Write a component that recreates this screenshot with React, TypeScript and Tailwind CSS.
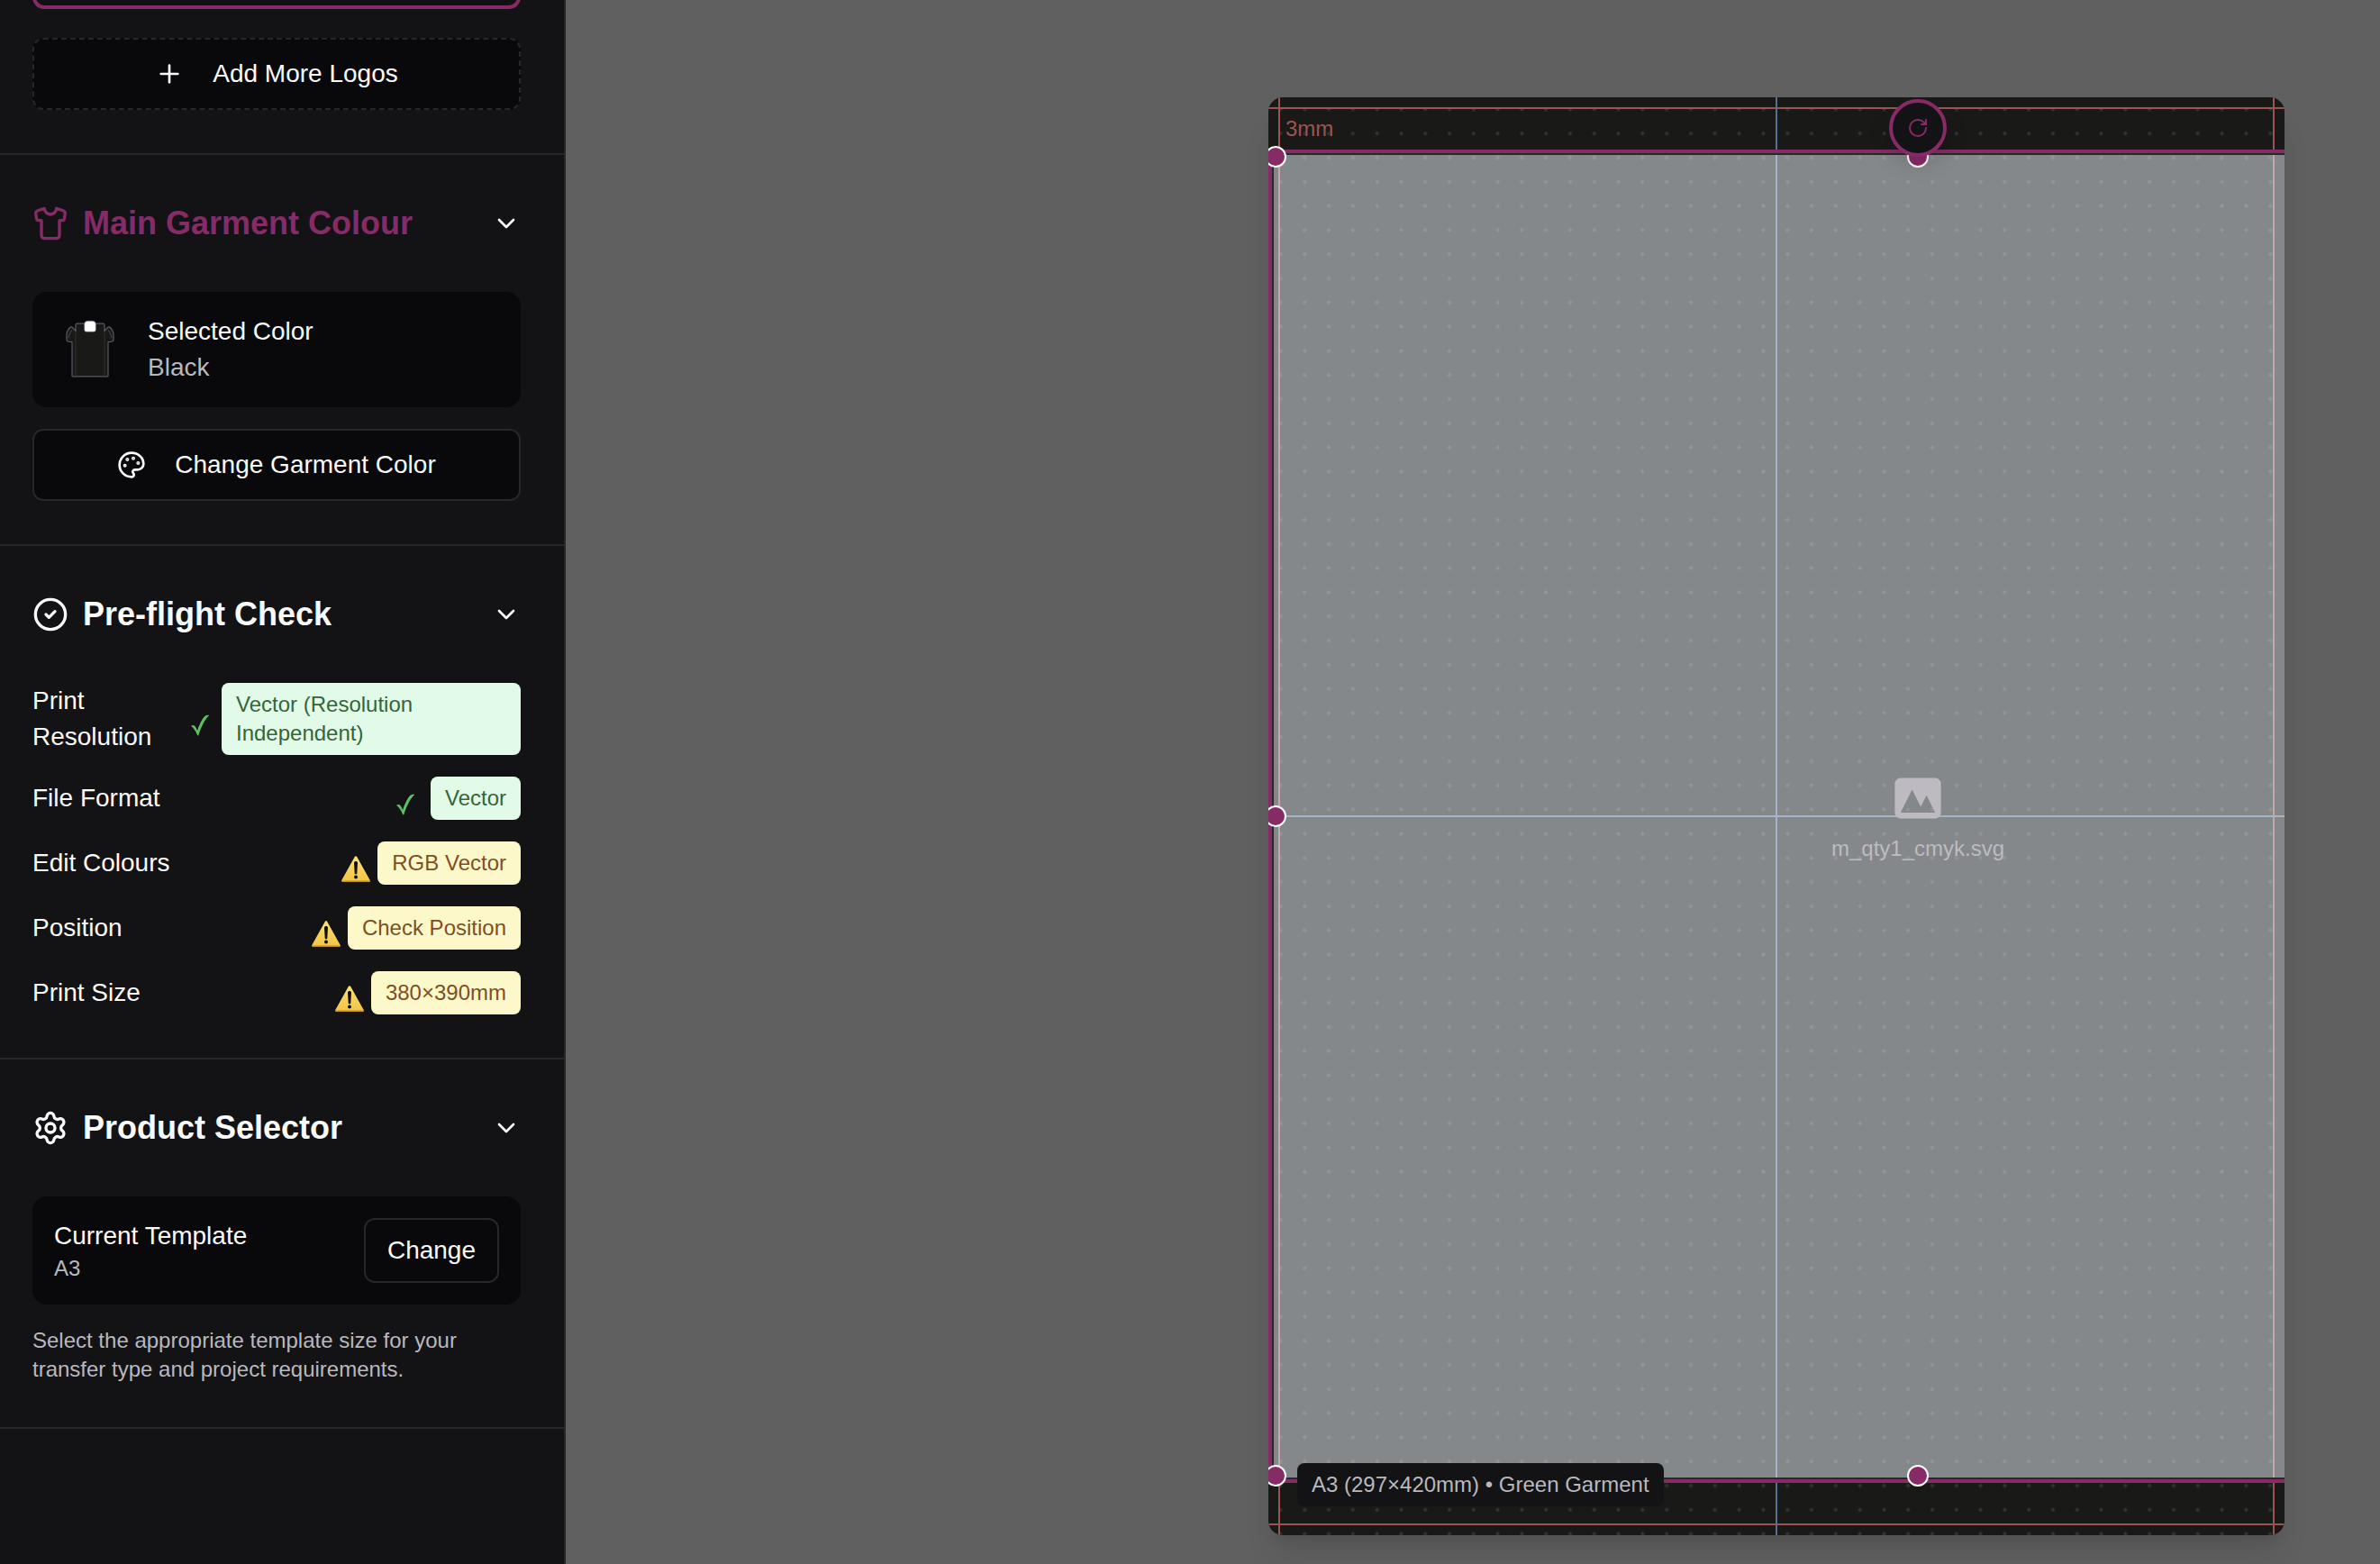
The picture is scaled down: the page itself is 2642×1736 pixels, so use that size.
import React from "react";
import {
  ChevronDown,
  CircleCheck,
  Palette,
  Plus,
  RotateCw,
  Settings,
  Shirt,
} from "lucide-react";

type Status = "ok" | "warn";

const checks: { label: string; value: string; status: Status; wide?: boolean }[] = [
  { label: "Print Resolution", value: "Vector (Resolution Independent)", status: "ok", wide: true },
  { label: "File Format", value: "Vector", status: "ok" },
  { label: "Edit Colours", value: "RGB Vector", status: "warn" },
  { label: "Position", value: "Check Position", status: "warn" },
  { label: "Print Size", value: "380×390mm", status: "warn" },
];

function TickIcon({ wide }: { wide?: boolean }) {
  return (
    <svg
      viewBox={wide ? "0 0 28 48" : "0 0 32 48"}
      className={wide ? "h-12 w-7 shrink-0" : "h-12 w-8 shrink-0"}
      aria-label="Passed"
    >
      <path
        d="M2 31.800C3.200 30.800 5.200 30.700 6.200 31.800 7.400 33.200 8.400 35 9.100 37 11.500 29.800 14.500 23.600 17.500 20.800 18.900 19.600 20.800 19.500 22.400 19.900 17.800 23.600 13.300 32.500 10.400 41.900 10.100 42.700 9.400 42.700 9.100 41.900 7.300 37.600 5.200 34.400 2 31.800Z"
        fill="#5fc063"
      />
    </svg>
  );
}

function WarnIcon() {
  return (
    <svg viewBox="0 0 32 48" className="h-12 w-8 shrink-0" aria-label="Warning">
      <defs>
        <linearGradient id="warn-fill" x1="0" y1="0" x2="0" y2="1">
          <stop offset="0" stopColor="#fbdf72" />
          <stop offset="1" stopColor="#f3c545" />
        </linearGradient>
      </defs>
      <path
        d="M14.900 16.800c.5-.9 1.700-.9 2.200 0L31.700 43c.5 1 0 1.900-1.100 1.900H1.400C.3 44.900-.2 44 .3 43Z"
        fill="url(#warn-fill)"
      />
      <path d="M.4 43.600h31.200c.1.800-.4 1.400-1.200 1.400H1.500C.7 45 .3 44.400.4 43.600Z" fill="#c08f2c" />
      <path d="M14 23.800c0-2.400 4-2.400 4 0l-.7 11.400c-.1 1.600-2.500 1.600-2.600 0Z" fill="#101010" />
      <circle cx="16" cy="39.600" r="2" fill="#101010" />
    </svg>
  );
}

function GarmentPreview() {
  return (
    <svg viewBox="0 0 80 80" className="size-20 shrink-0" aria-label="Black garment">
      <g fill="#191917" stroke="#565b66" strokeWidth="1.200" strokeLinejoin="round">
        <path d="M24 19.500 20.500 15.500C19.700 14.600 18.500 14.500 17.600 15.500 15.500 18 14 20.500 14 23v5.500c0 1.500 1.500 3 4 3h2V69c0 .6.400.9 1 .9h38c.6 0 1-.3 1-.9V31.500h2c2.500 0 4-1.500 4-3V23c0-2.500-1.500-5-3.600-7.500-.9-1-2.100-.9-2.900 0L56 19.500V13c0-1.100-.7-1.800-1.800-1.800H25.800c-1.100 0-1.800.7-1.800 1.800Z" />
      </g>
      <path d="M24 20v48M56 20v48" stroke="#2a2a2a" strokeWidth="1.500" fill="none" />
      <path d="M16 27c.5-3.500 2-6.500 4-8.500M64 27c-.5-3.500-2-6.500-4-8.500" stroke="#4a4e57" strokeWidth="1" fill="none" />
      <path d="M33.700 12c0-2.500 1.500-3.700 4-3.700h4.600c2.500 0 4 1.200 4 3.700v6c0 1.500-.8 2.200-2.200 2.200h-8.200c-1.400 0-2.200-.7-2.200-2.200Z" fill="#fff" stroke="#6b7280" strokeWidth=".6" />
    </svg>
  );
}

function Section({
  title,
  icon,
  accent,
  children,
}: {
  title: string;
  icon: React.ReactNode;
  accent?: boolean;
  children: React.ReactNode;
}) {
  return (
    <section className="border-b-2 border-[#27272a] py-12 pr-12 pl-9">
      <h2>
        <button
          type="button"
          aria-expanded="true"
          className={
            accent
              ? "mb-12 flex h-14 w-full items-center gap-4 text-left text-4xl font-bold text-[#862b66]"
              : "mb-12 flex h-14 w-full items-center gap-4 text-left text-4xl font-bold text-[#fafafa]"
          }
        >
          {icon}
          <span className="flex-1">{title}</span>
          <ChevronDown className="size-8 text-[#fafafa]" />
        </button>
      </h2>
      {children}
    </section>
  );
}

function Sidebar() {
  return (
    <aside className="w-[628px] shrink-0 overflow-hidden border-r-2 border-[#27272a] bg-[#131315]">
      <div className="border-b-2 border-[#27272a] pr-12 pb-12 pl-9">
        <div className="-mt-4 h-[26px] rounded-2xl border-4 border-[#862b66] bg-[#111113]" />
        <button
          type="button"
          className="mt-8 flex h-20 w-full items-center justify-center gap-8 rounded-xl border-2 border-dashed border-[#27272a] bg-[#09090b]"
        >
          <Plus className="size-8" />
          Add More Logos
        </button>
      </div>

      <Section title="Main Garment Colour" accent icon={<Shirt className="size-10" />}>
        <div className="flex items-center gap-6 rounded-2xl bg-[#09090b] p-6">
          <GarmentPreview />
          <div>
            <p>Selected Color</p>
            <p className="text-[#b9b8be]">Black</p>
          </div>
        </div>
        <button
          type="button"
          className="mt-6 flex h-20 w-full items-center justify-center gap-8 rounded-xl border-2 border-[#27272a] bg-[#09090b]"
        >
          <Palette className="size-8" />
          Change Garment Color
        </button>
      </Section>

      <Section title="Pre-flight Check" icon={<CircleCheck className="size-10" />}>
        <ul className="flex flex-col gap-6">
          {checks.map((c) => (
            <li key={c.label} className="flex items-center justify-between">
              <span>{c.label}</span>
              <span className="flex shrink-0 items-center gap-2">
                {c.status === "ok" ? <TickIcon wide={c.wide} /> : <WarnIcon />}
                <span
                  className={
                    c.status === "ok"
                      ? "max-w-[332px] rounded-lg bg-[#e2fbe8] px-4 py-2 text-2xl leading-8 text-[#356539]"
                      : "rounded-lg bg-[#fdf8ca] px-4 py-2 text-2xl leading-8 text-[#7f4f24]"
                  }
                >
                  {c.value}
                </span>
              </span>
            </li>
          ))}
        </ul>
      </Section>

      <Section title="Product Selector" icon={<Settings className="size-10" />}>
        <div className="flex items-center justify-between rounded-2xl bg-[#09090b] p-6">
          <div>
            <p>Current Template</p>
            <p className="text-2xl leading-8 text-[#b9b8be]">A3</p>
          </div>
          <button
            type="button"
            className="h-[72px] rounded-xl border-2 border-[#27272a] px-6"
          >
            Change
          </button>
        </div>
        <p className="mt-6 text-2xl leading-8 text-[#b9b8be]">
          Select the appropriate template size for your transfer type and project requirements.
        </p>
      </Section>
    </aside>
  );
}

const handle = "absolute size-6 rounded-full border-2 border-white bg-[#862b66]";

function Artboard() {
  return (
    <div className="relative h-[1596px] w-[1128px] overflow-hidden rounded-2xl bg-[#191917]">
      <svg className="absolute inset-0 size-full" aria-hidden="true">
        <defs>
          <pattern id="dots" width="26.800" height="26.800" patternUnits="userSpaceOnUse">
            <path d="M13.400 10.900 15.900 13.400 13.400 15.900 10.900 13.400Z" fill="#323338" />
          </pattern>
        </defs>
        <rect width="100%" height="100%" fill="url(#dots)" />
      </svg>

      {/* Bleed guides */}
      <div className="absolute inset-y-0 left-[11px] w-0.5 bg-[#9b5551]" />
      <div className="absolute inset-y-0 right-[11px] w-0.5 bg-[#9b5551]" />
      <div className="absolute inset-x-0 top-[11px] h-0.5 bg-[#9b5551]" />
      <div className="absolute inset-x-0 bottom-[11px] h-0.5 bg-[#9b5551]" />
      <span className="absolute top-[19px] left-[19px] text-2xl leading-8 text-[#9b5551]">3mm</span>

      {/* Centre guides */}
      <div className="absolute inset-y-0 left-[563px] w-0.5 bg-[#5a7092]" />
      <div className="absolute inset-x-0 top-[797px] h-0.5 bg-[#5a7092]" />

      {/* Placed logo */}
      <div className="absolute top-[58px] left-0 h-[1480px] w-[1442px] border-4 border-[#862b66]">
        <div className="flex size-full flex-col items-center justify-center gap-2 border-2 border-[#29292b] bg-[#f1f7fd]/50">
          <svg viewBox="0 0 20 20" className="size-16 text-[#bdbbc1]" fill="currentColor" aria-hidden="true">
            <path
              fillRule="evenodd"
              clipRule="evenodd"
              d="M4 3a2 2 0 00-2 2v10a2 2 0 002 2h12a2 2 0 002-2V5a2 2 0 00-2-2H4zm12 12H4l4-8 3 6 2-4 3 6z"
            />
          </svg>
          <span className="text-2xl leading-8 text-[#bdbbc1]">m_qty1_cmyk.svg</span>
        </div>
        <span className={`${handle} -top-2 -left-2`} />
        <span className={`${handle} -top-2 left-[705px]`} />
        <span className={`${handle} top-[724px] -left-2`} />
        <span className={`${handle} -bottom-2 -left-2`} />
        <span className={`${handle} -bottom-2 left-[705px]`} />
        <button
          type="button"
          aria-label="Rotate"
          className="absolute -top-[60px] left-[685px] flex size-16 items-center justify-center rounded-full border-4 border-[#862b66] bg-[#131315] text-[#862b66] shadow-[0_8px_24px_rgba(0,0,0,0.15)]"
        >
          <RotateCw className="size-6" />
        </button>
      </div>

      <div className="absolute bottom-8 left-8 rounded-lg bg-[#131315] px-4 py-2 text-2xl leading-8 text-[#b9b8be]">
        A3 (297×420mm) • Green Garment
      </div>
    </div>
  );
}

export default function App() {
  return (
    <div className="flex min-h-screen bg-[#606060] font-['Liberation_Sans',Arial,sans-serif] text-[28px] leading-10 text-[#fafafa]">
      <Sidebar />
      <main className="flex flex-1 items-start justify-end overflow-hidden pt-[108px] pr-[106px]">
        <div className="rounded-2xl shadow-[0_27px_34px_-7px_rgba(0,0,0,0.1),0_11px_14px_-8px_rgba(0,0,0,0.1)]">
          <Artboard />
        </div>
      </main>
    </div>
  );
}
